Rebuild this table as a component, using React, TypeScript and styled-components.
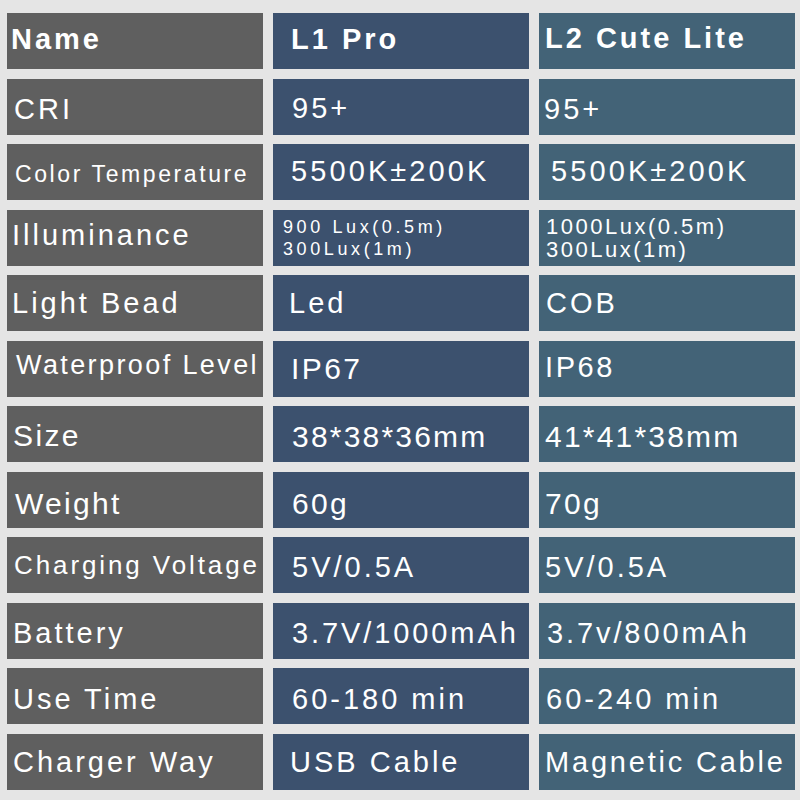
import React from "react";
import styled, { createGlobalStyle } from "styled-components";

const Global = createGlobalStyle`
  html, body { margin: 0; padding: 0; background: #e5e5e5; }
  body { font-family: "Liberation Sans", Arial, sans-serif; }
`;

const Table = styled.div`
  display: grid;
  grid-template-columns: repeat(3, 256px);
  grid-auto-rows: 56px;
  column-gap: 10px;
  row-gap: 9.5px;
  padding: 13px 5px 10px 7px;
  width: 800px;
  box-sizing: border-box;
`;

type Tone = "gray" | "blue" | "teal";
const tones: Record<Tone, string> = {
  gray: "#5f5f5f",
  blue: "#3c516e",
  teal: "#436377",
};

const Cell = styled.div<{ $tone: Tone; $pad: number }>`
  background: ${(p) => tones[p.$tone]};
  display: flex;
  flex-direction: column;
  justify-content: center;
  padding-left: ${(p) => p.$pad}px;
  box-sizing: border-box;
  overflow: hidden;
  white-space: nowrap;
  color: #ffffff;
`;

const Label = styled.span<{ $size: number; $ls: number; $dy: number; $bold?: boolean; $lh?: number }>`
  display: block;
  font-size: ${(p) => p.$size}px;
  letter-spacing: ${(p) => p.$ls}px;
  font-weight: ${(p) => (p.$bold ? 700 : 400)};
  line-height: ${(p) => (p.$lh ? `${p.$lh}px` : "normal")};
  transform: translateY(${(p) => p.$dy}px);
`;

type Spec = {
  t: string[];
  size?: number;
  ls?: number;
  dy?: number;
  pad?: number;
  lh?: number;
};

type Row = { cells: [Spec, Spec, Spec]; bold?: boolean };

const rows: Row[] = [
  { bold: true, cells: [
    { t: ["Name"], dy: -2, pad: 4 },
    { t: ["L1 Pro"], dy: -2, pad: 18 },
    { t: ["L2 Cute Lite"], dy: -3, pad: 6 },
  ] },
  { cells: [
    { t: ["CRI"], dy: 3, pad: 7 },
    { t: ["95+"], dy: 2 },
    { t: ["95+"], dy: 3, pad: 5 },
  ] },
  { cells: [
    { t: ["Color Temperature"], size: 23, ls: 2.6, dy: 2, pad: 8 },
    { t: ["5500K±200K"], ls: 3.1, dy: -1, pad: 18 },
    { t: ["5500K±200K"], ls: 3.1, dy: -1, pad: 12 },
  ] },
  { cells: [
    { t: ["Illuminance"], dy: -2, pad: 5 },
    { t: ["900 Lux(0.5m)", "300Lux(1m)"], size: 18, ls: 3.6, lh: 22, dy: 0, pad: 10 },
    { t: ["1000Lux(0.5m)", "300Lux(1m)"], size: 22, ls: 2.5, lh: 23, dy: 0, pad: 7 },
  ] },
  { cells: [
    { t: ["Light Bead"], dy: 0, pad: 5 },
    { t: ["Led"], dy: 0, pad: 16 },
    { t: ["COB"], dy: 0, pad: 7 },
  ] },
  { cells: [
    { t: ["Waterproof Level"], size: 27, ls: 2.4, dy: -3, pad: 9 },
    { t: ["IP67"], size: 30, ls: 2.4, dy: 0, pad: 18 },
    { t: ["IP68"], ls: 2.6, dy: -1, pad: 6 },
  ] },
  { cells: [
    { t: ["Size"], size: 30, ls: 2.4, dy: 2, pad: 6 },
    { t: ["38*38*36mm"], size: 30, ls: 2.2, dy: 3 },
    { t: ["41*41*38mm"], size: 30, ls: 2.2, dy: 3, pad: 6 },
  ] },
  { cells: [
    { t: ["Weight"], size: 30, ls: 2.3, dy: 4, pad: 8 },
    { t: ["60g"], size: 30, ls: 2.3, dy: 4 },
    { t: ["70g"], size: 30, ls: 2.3, dy: 4, pad: 6 },
  ] },
  { cells: [
    { t: ["Charging Voltage"], size: 26, ls: 2.9, dy: 0, pad: 7 },
    { t: ["5V/0.5A"], dy: 2 },
    { t: ["5V/0.5A"], dy: 2, pad: 6 },
  ] },
  { cells: [
    { t: ["Battery"], dy: 3, pad: 6 },
    { t: ["3.7V/1000mAh"], ls: 2.9, dy: 3 },
    { t: ["3.7v/800mAh"], ls: 2.9, dy: 3, pad: 8 },
  ] },
  { cells: [
    { t: ["Use Time"], dy: 3, pad: 6 },
    { t: ["60-180 min"], dy: 3 },
    { t: ["60-240 min"], dy: 3, pad: 7 },
  ] },
  { cells: [
    { t: ["Charger Way"], dy: 1, pad: 6 },
    { t: ["USB Cable"], dy: 1, pad: 17 },
    { t: ["Magnetic Cable"], dy: 1, pad: 6, ls: 2.8 },
  ] },
];

const colTones: Tone[] = ["gray", "blue", "teal"];
const defaultPad = [7, 19, 6];

export default function App() {
  return (
    <>
      <Global />
      <Table>
        {rows.map((row, ri) =>
          row.cells.map((c, ci) => (
            <Cell key={`${ri}-${ci}`} $tone={colTones[ci]} $pad={c.pad ?? defaultPad[ci]}>
              {c.t.map((line, li) => (
                <Label
                  key={li}
                  $size={c.size ?? 29}
                  $ls={c.ls ?? 3}
                  $dy={c.dy ?? 0}
                  $lh={c.lh}
                  $bold={row.bold}
                >
                  {line}
                </Label>
              ))}
            </Cell>
          ))
        )}
      </Table>
    </>
  );
}
